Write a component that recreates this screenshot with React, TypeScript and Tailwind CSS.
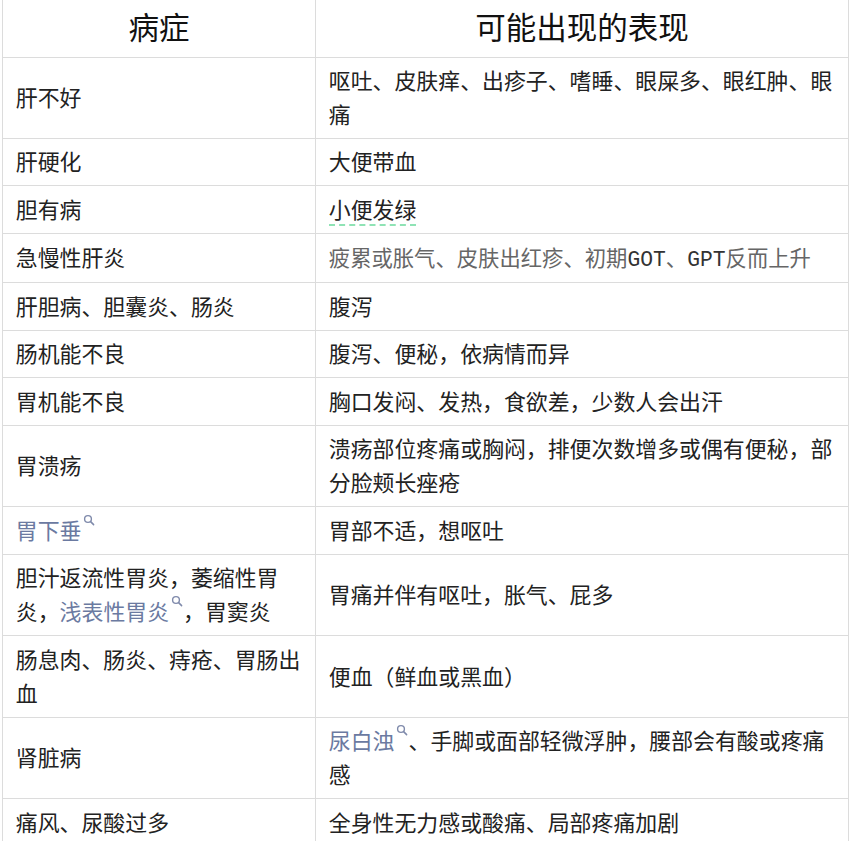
const cjk = "font-['Noto_Sans_CJK_SC',sans-serif]";

function SearchMark() {
  return (
    <svg viewBox="0 0 12 12" className="ml-[2px] inline-block h-[12px] w-[12px] -translate-y-[13px] align-baseline" aria-hidden="true">
      <circle cx="5" cy="5" r="3.4" fill="none" stroke="#7f8aab" strokeWidth="1.4" />
      <path d="M7.6 7.6 10.6 10.6" stroke="#7f8aab" strokeWidth="1.5" strokeLinecap="round" />
    </svg>
  );
}

function Term({ children }: { children: string }) {
  return (
    <span>
      <span className="text-[#6b7aa1]">{children}</span>
      <SearchMark />
    </span>
  );
}

const rows: [React.ReactNode, React.ReactNode][] = [
  ["肝不好", "呕吐、皮肤痒、出疹子、嗜睡、眼屎多、眼红肿、眼痛"],
  ["肝硬化", "大便带血"],
  ["胆有病", <span className="border-b-2 border-dashed border-[#8fe3b5]">小便发绿</span>],
  [
    "急慢性肝炎",
    <span className="text-[21.33px] leading-[36px] text-[#666]">
      疲累或胀气、皮肤出红疹、初期<span className="font-['Liberation_Mono',monospace] leading-none text-[#333]">GOT</span>、
      <span className="font-['Liberation_Mono',monospace] leading-none text-[#333]">GPT</span>反而上升
    </span>,
  ],
  ["肝胆病、胆囊炎、肠炎", "腹泻"],
  ["肠机能不良", "腹泻、便秘，依病情而异"],
  ["胃机能不良", "胸口发闷、发热，食欲差，少数人会出汗"],
  ["胃溃疡", "溃疡部位疼痛或胸闷，排便次数增多或偶有便秘，部分脸颊长痤疮"],
  [<Term>胃下垂</Term>, "胃部不适，想呕吐"],
  [
    <>
      胆汁返流性胃炎，萎缩性胃炎，<Term>浅表性胃炎</Term>，胃窦炎
    </>,
    "胃痛并伴有呕吐，胀气、屁多",
  ],
  ["肠息肉、肠炎、痔疮、胃肠出血", "便血（鲜血或黑血）"],
  [
    "肾脏病",
    <>
      <Term>尿白浊</Term>、手脚或面部轻微浮肿，腰部会有酸或疼痛感
    </>,
  ],
  ["痛风、尿酸过多", "全身性无力感或酸痛、局部疼痛加剧"],
];

export default function App() {
  return (
    <div className={`h-[841px] overflow-hidden bg-white pl-[2px] text-[#222] ${cjk}`}>
      <table className="w-[846px] table-fixed border-collapse text-[21.9px] leading-[34px]">
        <colgroup>
          <col className="w-[313px]" />
          <col className="w-[533px]" />
        </colgroup>
        <thead>
          <tr className="h-[57px]">
            <th className="border border-t-0 border-[#dcdcdc] pb-[4px] text-center text-[30.5px] font-normal text-[#111]">病症</th>
            <th className="border border-t-0 border-[#dcdcdc] pb-[4px] text-center text-[30.5px] font-normal text-[#111]">可能出现的表现</th>
          </tr>
        </thead>
        <tbody>
          {rows.map(([name, signs], i) => (
            <tr key={i}>
              <td className="border border-[#dcdcdc] px-[12.8px] pt-[5.4px] pb-[7.1px]">{name}</td>
              <td className="border border-[#dcdcdc] px-[12.8px] pt-[5.4px] pb-[7.1px]">{signs}</td>
            </tr>
          ))}
        </tbody>
      </table>
    </div>
  );
}
